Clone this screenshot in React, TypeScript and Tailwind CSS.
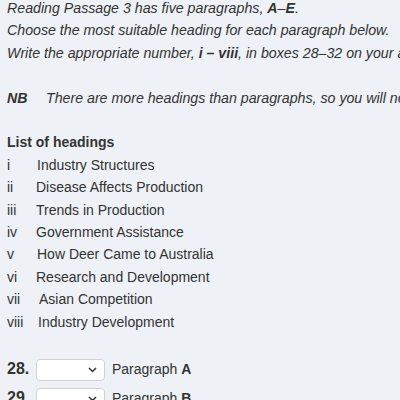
import React from "react";

const headings: [string, string, number][] = [
  ["i", "Industry Structures", 30],
  ["ii", "Disease Affects Production", 29],
  ["iii", "Trends in Production", 29],
  ["iv", "Government Assistance", 29],
  ["v", "How Deer Came to Australia", 30],
  ["vi", "Research and Development", 29],
  ["vii", "Asian Competition", 32],
  ["viii", "Industry Development", 31],
];

function Select() {
  return (
    <div className="relative w-[69px] h-[22px] rounded-[4px] border border-[#cfd3d8] bg-white shrink-0">
      <svg
        className="absolute right-[7px] top-[7px]"
        width="9"
        height="6"
        viewBox="0 0 9 6"
        fill="none"
      >
        <path d="M1 1l3.5 3.5L8 1" stroke="#333" strokeWidth="1.5" />
      </svg>
    </div>
  );
}

export default function App() {
  return (
    <div
      className="w-[400px] h-[400px] overflow-hidden bg-[#eef1f5] text-[#333] text-[14px] leading-[22.4px] whitespace-nowrap"
      style={{ fontFamily: '"Liberation Sans", Arial, sans-serif' }}
    >
      <div className="pl-[7px] mt-[-3px]">
        <div className="italic text-[14.2px]">
          Reading Passage 3 has five paragraphs, <b>A</b>–<b>E</b>.
        </div>
        <div className="italic text-[14.2px]">
          Choose the most suitable heading for each paragraph below.
        </div>
        <div className="italic text-[14.2px]">
          Write the appropriate number, <b>i – viii</b>, in boxes 28–32 on your answer sheet.
        </div>
        <div className="h-[22.4px]" />
        <div className="italic flex text-[14.2px]">
          <b className="w-[39px] shrink-0">NB</b>
          <span>There are more headings than paragraphs, so you will not use them all.</span>
        </div>
        <div className="h-[22.4px]" />
        <div className="font-bold">List of headings</div>
        {headings.map(([n, t, w]) => (
          <div key={n} className="flex">
            <span className="shrink-0" style={{ width: w }}>{n}</span>
            <span>{t}</span>
          </div>
        ))}
        <div className="h-[22px]" />
        {[
          ["28.", "A"],
          ["29.", "B"],
          ["30.", "C"],
        ].map(([q, p]) => (
          <div key={q} className="flex items-center h-[29px]">
            <span className="font-bold text-[16px] w-[29px] shrink-0">{q}</span>
            <Select />
            <span className="ml-[7px]">
              Paragraph <b>{p}</b>
            </span>
          </div>
        ))}
      </div>
    </div>
  );
}
